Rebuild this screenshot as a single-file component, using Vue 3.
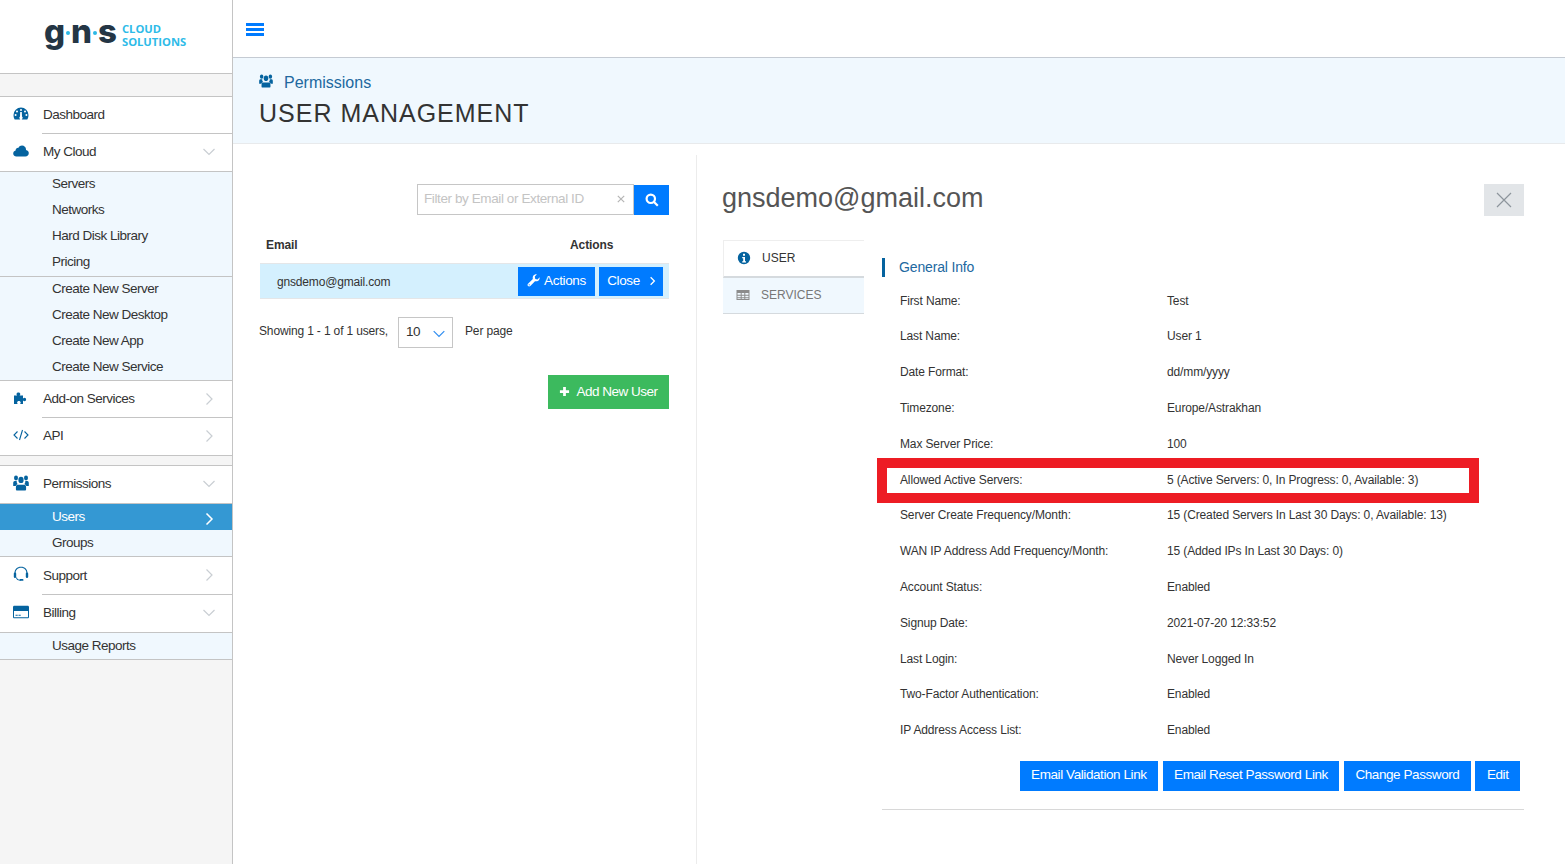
<script setup>
const sub1 = ['Servers', 'Networks', 'Hard Disk Library', 'Pricing']
const sub2 = ['Create New Server', 'Create New Desktop', 'Create New App', 'Create New Service']
const rows = [
  ['First Name:', 'Test'],
  ['Last Name:', 'User 1'],
  ['Date Format:', 'dd/mm/yyyy'],
  ['Timezone:', 'Europe/Astrakhan'],
  ['Max Server Price:', '100'],
  ['Allowed Active Servers:', '5 (Active Servers: 0, In Progress: 0, Available: 3)'],
  ['Server Create Frequency/Month:', '15 (Created Servers In Last 30 Days: 0, Available: 13)'],
  ['WAN IP Address Add Frequency/Month:', '15 (Added IPs In Last 30 Days: 0)'],
  ['Account Status:', 'Enabled'],
  ['Signup Date:', '2021-07-20 12:33:52'],
  ['Last Login:', 'Never Logged In'],
  ['Two-Factor Authentication:', 'Enabled'],
  ['IP Address Access List:', 'Enabled']
]
const actions = ['Email Validation Link', 'Email Reset Password Link', 'Change Password', 'Edit']
</script>

<template>
  <div class="app">
    <aside class="side">
      <div class="logo">
        <div class="gns">
          <span>g</span><i class="dot"></i><span>n</span><i class="dot"></i><span>s</span>
        </div>
        <div class="tag"><span>CLOUD</span><span>SOLUTIONS</span></div>
      </div>
      <div class="band"></div>

      <div class="item inset">
        <svg class="ic" viewBox="0 0 16 16"><path fill-rule="evenodd" d="M8 1.500A7.500 7.500 0 0 0 .5 9c0 1.800.5 3.400 1.200 4.500h12.600c.7-1.100 1.200-2.700 1.200-4.500A7.500 7.500 0 0 0 8 1.500ZM8 3a1 1 0 1 1 0 2 1 1 0 0 1 0-2ZM4 4.500a1 1 0 1 1 0 2 1 1 0 0 1 0-2Zm8 0a1 1 0 1 1 0 2 1 1 0 0 1 0-2ZM2.600 8a1 1 0 1 1 0 2 1 1 0 0 1 0-2Zm10.800 0a1 1 0 1 1 0 2 1 1 0 0 1 0-2ZM7.200 6h1.600l.2 4.600a1.600 1.600 0 1 1-2 0Z"/></svg>
        <span>Dashboard</span>
      </div>
      <div class="item tall">
        <svg class="ic" viewBox="0 0 16 16"><path d="M3.600 13.500A3.100 3.100 0 0 1 .2 10.400c0-1.500 1-2.700 2.400-3C2.700 5.500 4 4.500 5.500 4.700 6.200 3.400 7.500 2.600 9 2.600c2.200 0 4 1.700 4 3.900v.4c1.600.3 2.800 1.600 2.800 3.200 0 2-1.500 3.400-3.400 3.400Z"/></svg>
        <span>My Cloud</span>
        <svg class="chev" viewBox="0 0 12 12"><path d="M.5 3 6 8.500 11.500 3"/></svg>
      </div>
      <div class="subs">
        <div v-for="s in sub1" :key="s" class="sub tight">{{ s }}</div>
      </div>
      <div class="subs short">
        <div v-for="s in sub2" :key="s" class="sub tight">{{ s }}</div>
      </div>
      <div class="item inset">
        <svg class="ic" viewBox="0 0 16 16"><path d="M1 5.500h3.200C3.600 4.900 3.500 4.400 3.500 4c0-1 .8-1.600 1.900-1.600S7.300 3 7.300 4c0 .4-.2.900-.7 1.500h3.400v3c.6-.5 1-.7 1.500-.7 1 0 1.600.8 1.600 1.700s-.6 1.700-1.600 1.700c-.5 0-.9-.2-1.500-.7v3.500H7c.5-.6.7-1.100.7-1.500 0-.9-.8-1.500-1.800-1.500s-1.800.6-1.800 1.500c0 .4.200.9.7 1.500H1Z"/></svg>
        <span>Add-on Services</span>
        <svg class="chev" viewBox="0 0 12 12"><path d="M3.500.5 9 6l-5.500 5.500"/></svg>
      </div>
      <div class="item tall">
        <svg class="ic line" viewBox="0 0 16 16"><path d="M4.500 4.500 1 8l3.500 3.500M11.500 4.500 15 8l-3.500 3.500M9.500 3l-3 10"/></svg>
        <span>API</span>
        <svg class="chev" viewBox="0 0 12 12"><path d="M3.500.5 9 6l-5.500 5.500"/></svg>
      </div>
      <div class="gap"></div>
      <div class="item tall">
        <svg class="ic" viewBox="0 1.500 16 13" preserveAspectRatio="none"><circle cx="3" cy="4" r="2"/><circle cx="13" cy="4" r="2"/><circle cx="8" cy="5.500" r="2.600"/><path d="M.2 10.500V8c0-1 .7-1.600 1.500-1.600h2c-.1 1.200.4 2 1 2.600-1.200.3-1.800 1-2 1.500ZM15.800 10.500V8c0-1-.7-1.600-1.500-1.600h-2c.1 1.200-.4 2-1 2.600 1.200.3 1.800 1 2 1.500ZM3.500 14c-.4 0-.6-.3-.6-.7v-1.800c0-1.400 1-2 2.100-2h6c1.100 0 2.100.6 2.100 2v1.800c0 .4-.2.700-.6.700Z"/></svg>
        <span>Permissions</span>
        <svg class="chev" viewBox="0 0 12 12"><path d="M.5 3 6 8.500 11.500 3"/></svg>
      </div>
      <div class="subs">
        <div class="sub active">
          <span>Users</span>
          <svg class="chev white" viewBox="0 0 12 12"><path d="M3.500.5 9 6l-5.500 5.500"/></svg>
        </div>
        <div class="sub">Groups</div>
      </div>
      <div class="item inset wide">
        <svg class="ic" viewBox="0 0 16 16"><path d="M8 .8C4 .8 1.500 3.500 1.500 7H2.600c0-3.100 2.300-5.200 5.400-5.200s5.400 2.100 5.400 5.200h1.100C14.500 3.500 12 .8 8 .8Z"/><rect x=".8" y="6.500" width="2.400" height="5.500" rx="1.200"/><rect x="12.800" y="6.500" width="2.400" height="5.500" rx="1.200"/><path d="M3 11.500c.2 1.700 1.500 3 3.500 3h1.500v-.8H6.500c-1.400 0-2.300-.9-2.500-2.200Z"/><rect x="6.500" y="13" width="4" height="1.800" rx=".9"/></svg>
        <span>Support</span>
        <svg class="chev" viewBox="0 0 12 12"><path d="M3.500.5 9 6l-5.500 5.500"/></svg>
      </div>
      <div class="item tall">
        <svg class="ic" viewBox="0 0 16 16"><path fill-rule="evenodd" d="M1.300 1.800h13.400c.7 0 1.300.6 1.300 1.300v9.800c0 .7-.6 1.300-1.300 1.300H1.300C.6 14.200 0 13.600 0 12.900V3.100c0-.7.6-1.300 1.300-1.300ZM1 7v5.900c0 .2.100.3.300.3h13.400c.2 0 .3-.1.300-.3V7ZM2.500 10.800h2.200v1H2.500Zm3 0h2.200v1H5.500Z"/></svg>
        <span>Billing</span>
        <svg class="chev" viewBox="0 0 12 12"><path d="M.5 3 6 8.500 11.500 3"/></svg>
      </div>
      <div class="subs">
        <div class="sub usage">Usage Reports</div>
      </div>
    </aside>

    <div class="main">
      <header class="top">
        <div class="burger"><i></i><i></i><i></i></div>
      </header>
      <section class="banner">
        <div class="crumb">
          <svg class="crumb-ic" viewBox="0 1.500 16 13" preserveAspectRatio="none"><circle cx="3" cy="4" r="2"/><circle cx="13" cy="4" r="2"/><circle cx="8" cy="5.500" r="2.600"/><path d="M.2 10.500V8c0-1 .7-1.600 1.500-1.600h2c-.1 1.200.4 2 1 2.600-1.200.3-1.800 1-2 1.500ZM15.800 10.500V8c0-1-.7-1.600-1.500-1.600h-2c.1 1.200-.4 2-1 2.600 1.200.3 1.800 1 2 1.500ZM3.500 14c-.4 0-.6-.3-.6-.7v-1.800c0-1.400 1-2 2.100-2h6c1.100 0 2.100.6 2.100 2v1.800c0 .4-.2.700-.6.700Z"/></svg>
          <span>Permissions</span>
        </div>
        <h1>USER MANAGEMENT</h1>
      </section>

      <div class="body">
        <section class="list">
          <div class="filter">
            <div class="input">
              <span>Filter by Email or External ID</span>
              <svg class="x" viewBox="0 0 8 8"><path d="M.8.8l6.400 6.400M7.200.8.8 7.200"/></svg>
            </div>
            <button class="sbtn">
              <svg viewBox="0 0 14 14"><circle cx="5.800" cy="5.800" r="4.200"/><path d="M9 9l3.800 3.800"/></svg>
            </button>
          </div>
          <div class="thead"><span>Email</span><span class="th-act">Actions</span></div>
          <div class="tr">
            <span class="mail">gnsdemo@gmail.com</span>
            <button class="btn act">
              <svg class="wrench" viewBox="0 0 14 14"><path d="M13.600 3.500c.2 1.700-.4 3-1.600 3.800-1 .7-2.300.8-3.400.4L3.600 13c-.8.700-1.800.7-2.500 0-.7-.7-.7-1.700 0-2.500l5.200-5.100c-.3-1.200-.2-2.400.5-3.400C7.700.8 9.100.2 10.700.4L8.400 2.800l.5 2.500 2.500.6ZM2.400 11a.7.7 0 1 0 0 1.400.7.7 0 0 0 0-1.400Z"/></svg>
              Actions
            </button>
            <button class="btn cls">
              Close
              <svg class="cchev" viewBox="0 0 12 12"><path d="M3.500 1 8.500 6l-5 5"/></svg>
            </button>
          </div>
          <div class="pager">
            <span>Showing 1 - 1 of 1 users,</span>
            <div class="select">
              <span>10</span>
              <svg viewBox="0 0 12 8"><path d="M.7 1.200 6 6.500l5.300-5.300"/></svg>
            </div>
            <span>Per page</span>
          </div>
          <div class="addrow">
            <button class="add">
              <svg viewBox="0 0 12 12"><path d="M4.500 1h3v3.500H11v3H7.500V11h-3V7.500H1v-3h3.500Z"/></svg>
              Add New User
            </button>
          </div>
        </section>

        <section class="detail">
          <div class="dhead">
            <h2>gnsdemo@gmail.com</h2>
            <button class="closex">
              <svg viewBox="0 0 16 16"><path d="M1 1l14 14M15 1 1 15"/></svg>
            </button>
          </div>
          <div class="dbody">
            <nav class="tabs">
              <div class="tab on">
                <svg class="tic" viewBox="0 0 14 14"><path fill-rule="evenodd" d="M7 .8a6.200 6.200 0 1 0 0 12.400A6.200 6.200 0 0 0 7 .8ZM6 2.800h2v2H6Zm-.8 3.200h2.800v4.200h1v1.200H5.200v-1.200h1V7.200h-1Z"/></svg>
                USER
              </div>
              <div class="tab off">
                <svg class="tic" viewBox="0 0 14 14"><path fill-rule="evenodd" d="M.5 2h13v10H.5Zm1 3v1.700h3.200V5Zm4.200 0v1.700h2.600V5Zm3.600 0v1.700h3.200V5Zm-7.800 2.700v1.600h3.200V7.700Zm4.200 0v1.600h2.600V7.700Zm3.600 0v1.600h3.200V7.700Zm-7.800 2.600V11h3.200v-.7Zm4.200 0V11h2.600v-.7Zm3.600 0V11h3.200v-.7Z"/></svg>
                SERVICES
              </div>
            </nav>
            <div class="info">
              <div class="ititle">General Info</div>
              <dl class="grid">
                <div v-for="r in rows" :key="r[0]" class="row">
                  <dt>{{ r[0] }}</dt>
                  <dd>{{ r[1] }}</dd>
                </div>
              </dl>
              <div class="foot">
                <button v-for="a in actions" :key="a" class="btn fbtn">{{ a }}</button>
              </div>
              <div class="rule"></div>
              <div class="mark"></div>
            </div>
          </div>
        </section>
      </div>
    </div>
  </div>
</template>

<style>
html, body { margin: 0; background: #fff; overflow: hidden; }
</style>

<style scoped>
.app { display: flex; width: 1565px; height: 864px; font-family: "Liberation Sans", Arial, sans-serif; color: #333; overflow: hidden; }
button { font-family: inherit; border: 0; padding: 0; cursor: pointer; }

.side { width: 232px; flex: none; background: #f5f5f5; border-right: 1px solid #c4c4c4; box-sizing: content-box; }
.logo { height: 73px; background: #fff; border-bottom: 1px solid #c4c4c4; display: flex; align-items: flex-start; padding-left: 44px; box-sizing: content-box; }
.gns { display: flex; align-items: baseline; height: 45px; margin-top: 3px; font-family: Inter, sans-serif; font-weight: 800; font-size: 33px; line-height: 56px; color: #243645; }
.gns span { display: block; }
.dot { width: 4px; height: 4px; border-radius: 50%; background: #2bb8e6; margin: 0 1px; transform: translateY(-8px); }
.tag { display: flex; flex-direction: column; margin: 23px 0 0 5px; font-family: "Open Sans", sans-serif; font-weight: 700; font-size: 11.200px; line-height: 12.500px; color: #2ebbe8; }
.band { height: 22px; border-bottom: 1px solid #c4c4c4; }
.gap { height: 9px; border-bottom: 1px solid #c4c4c4; }

.item { position: relative; display: flex; align-items: center; background: #fff; font-size: 13.500px; letter-spacing: -.5px; padding-bottom: 3px; box-sizing: border-box; }
.item > span { margin-left: 43px; }
.inset { height: 37px; }
.inset.wide { height: 38px; padding-bottom: 2px; }
.inset::after { content: ""; position: absolute; left: 42px; right: 0; bottom: 0; height: 1px; background: #c4c4c4; }
.tall { height: 38px; border-bottom: 1px solid #c4c4c4; }
.ic { position: absolute; left: 13px; top: 9px; width: 16px; height: 16px; fill: #05639f; }
.ic.line { fill: none; stroke: #05639f; stroke-width: 1.100; }
.chev { position: absolute; right: 17px; top: 12px; width: 12px; height: 12px; fill: none; stroke: #c9ced3; stroke-width: 1.200; }
.chev.white { stroke: #fff; stroke-width: 1.500; top: 9px; }

.subs { background: #f0f8fe; border-bottom: 1px solid #c4c4c4; }
.subs.short { height: 103px; }
.sub { position: relative; height: 26px; padding: 0 0 2px 52px; box-sizing: border-box; display: flex; align-items: center; font-size: 13.500px; letter-spacing: -.5px; }
.sub.tight { padding-bottom: 4px; }
.sub.usage { padding-bottom: 1px; }
.sub.active { background: #3498d3; color: #fff; }

.main { flex: 1; min-width: 0; }
.top { height: 57px; border-bottom: 1px solid #c5cbd3; background: #fff; display: flex; align-items: center; padding-left: 13px; box-sizing: content-box; }
.burger { display: flex; flex-direction: column; gap: 2px; width: 18px; margin-top: 1px; }
.burger i { display: block; height: 3px; background: #007bff; }
.banner { height: 85px; background: #f0f8fe; border-bottom: 1px solid #e8eaec; padding-left: 26px; box-sizing: content-box; }
.crumb { display: flex; align-items: center; padding-top: 15px; height: 19px; font-size: 16px; color: #21689f; }
.crumb-ic { width: 14px; height: 14px; fill: #05639f; margin-right: 11px; margin-top: -3px; }
h1 { margin: 4px 0 0; font-weight: 400; font-size: 25px; line-height: 34px; letter-spacing: 1px; color: #333; }

.body { display: flex; height: 720px; }
.list { width: 410px; flex: none; margin-left: 26px; padding-top: 40px; box-sizing: content-box; font-size: 12px; }
.filter { display: flex; justify-content: flex-end; }
.input { position: relative; width: 217px; height: 31px; box-sizing: border-box; border: 1px solid #c6c6c6; padding: 0 0 2px 6px; display: flex; align-items: center; font-size: 13.500px; letter-spacing: -.4px; color: #c4c4c4; }
.x { position: absolute; right: 8px; top: 10px; width: 8px; height: 8px; fill: none; stroke: #b5b5b5; stroke-width: 1.200; }
.sbtn { width: 35px; height: 30px; margin-top: 1px; background: #007bff; display: flex; align-items: center; justify-content: center; }
.sbtn svg { width: 14px; height: 14px; fill: none; stroke: #fff; stroke-width: 2.200; }
.thead { position: relative; height: 48px; box-sizing: border-box; padding: 22px 0 0 7px; font-size: 12px; letter-spacing: -.1px; font-weight: 700; line-height: 16px; color: #333; }
.th-act { position: absolute; left: 311px; }
.tr { display: flex; align-items: center; height: 36px; margin-left: 1px; background: #d4f0fe; border-top: 1px solid #e4e6e8; border-bottom: 1px solid #e4e6e8; box-sizing: border-box; padding-right: 6px; }
.mail { flex: 1; padding: 1px 0 0 17px; font-size: 12px; letter-spacing: -.17px; color: #333; }
.btn { background: #007bff; color: #fff; font-size: 13.500px; letter-spacing: -.36px; display: inline-flex; align-items: center; justify-content: center; }
.act { width: 77px; height: 29px; gap: 4px; padding-bottom: 2px; }
.cls { width: 64px; height: 29px; margin-left: 4px; gap: 8px; padding: 0 0 2px 2px; }
.wrench { width: 13px; height: 13px; fill: #fff; }
.cchev { width: 9px; height: 10px; margin-top: 2px; fill: none; stroke: #fff; stroke-width: 1.700; }
.pager { display: flex; align-items: center; margin-top: 18px; height: 31px; font-size: 12px; letter-spacing: -.15px; color: #333; }
.pager > span { margin-bottom: 3px; }
.select { position: relative; width: 55px; height: 31px; box-sizing: border-box; border: 1px solid #c6c6c6; margin: 0 12px 0 10px; padding: 0 0 2px 7px; display: flex; align-items: center; font-size: 13.500px; letter-spacing: -.4px; }
.select svg { position: absolute; right: 7px; top: 12px; width: 12px; height: 8px; fill: none; stroke: #2f8df0; stroke-width: 1.200; }
.addrow { display: flex; justify-content: flex-end; margin-top: 27px; }
.add { width: 121px; height: 34px; padding-bottom: 2px; background: #3cba5e; color: #fff; font-size: 13.500px; letter-spacing: -.5px; display: flex; align-items: center; justify-content: center; gap: 6px; }
.add svg { width: 11px; height: 11px; fill: #fff; }

.detail { position: relative; flex: 1; margin: 11px 0 0 27px; border-left: 1px solid #ececec; padding-left: 25px; padding-right: 41px; min-width: 0; }
.dhead { display: flex; justify-content: space-between; align-items: flex-start; height: 85px; padding-top: 29px; box-sizing: border-box; }
h2 { margin: -1px 0 0; font-weight: 400; font-size: 27px; line-height: 30px; color: #555; }
.closex { width: 40px; height: 32px; background: #e2e5e8; display: flex; align-items: center; justify-content: center; }
.closex svg { width: 16px; height: 16px; fill: none; stroke: #8d959c; stroke-width: 1.200; }
.dbody { display: flex; }
.tabs { width: 141px; flex: none; margin-left: 1px; }
.tab { display: flex; align-items: center; height: 37px; font-size: 12px; color: #333; box-sizing: border-box; padding: 0 0 2px 13px; gap: 11px; }
.tab.on { background: #fff; border-top: 1px solid #eee; border-left: 1px solid #eee; border-bottom: 2px solid #d5dade; height: 38px; }
.tab.off { background: #f0f8fe; color: #777; border-bottom: 1px solid #d5dade; height: 36px; }
.tic { width: 14px; height: 14px; fill: #05639f; }
.off .tic { fill: #8c8c8c; }

.info { position: relative; flex: 1; margin-left: 18px; }
.ititle { position: relative; height: 19px; margin-top: 18px; padding-left: 14px; font-size: 14px; letter-spacing: -.15px; line-height: 19px; color: #21689f; border-left: 3px solid #05639f; box-sizing: border-box; }
.grid { margin: 5.650px 0 0; }
.row { display: flex; height: 35.800px; align-items: center; padding-left: 18px; font-size: 12px; letter-spacing: -.13px; color: #333; }
dt { width: 267px; flex: none; }
dd { margin: 0; }
.foot { display: flex; justify-content: flex-end; gap: 4.500px; margin-top: 12.700px; padding-right: 4px; }
.fbtn { height: 30px; box-sizing: border-box; padding: 0 11.500px 3px; letter-spacing: -.42px; }
.rule { height: 1px; margin-top: 18px; background: #d8d8d8; }
.mark { position: absolute; left: -5px; top: 218px; width: 582px; height: 25px; border: 10px solid #ed1c24; pointer-events: none; }
</style>
